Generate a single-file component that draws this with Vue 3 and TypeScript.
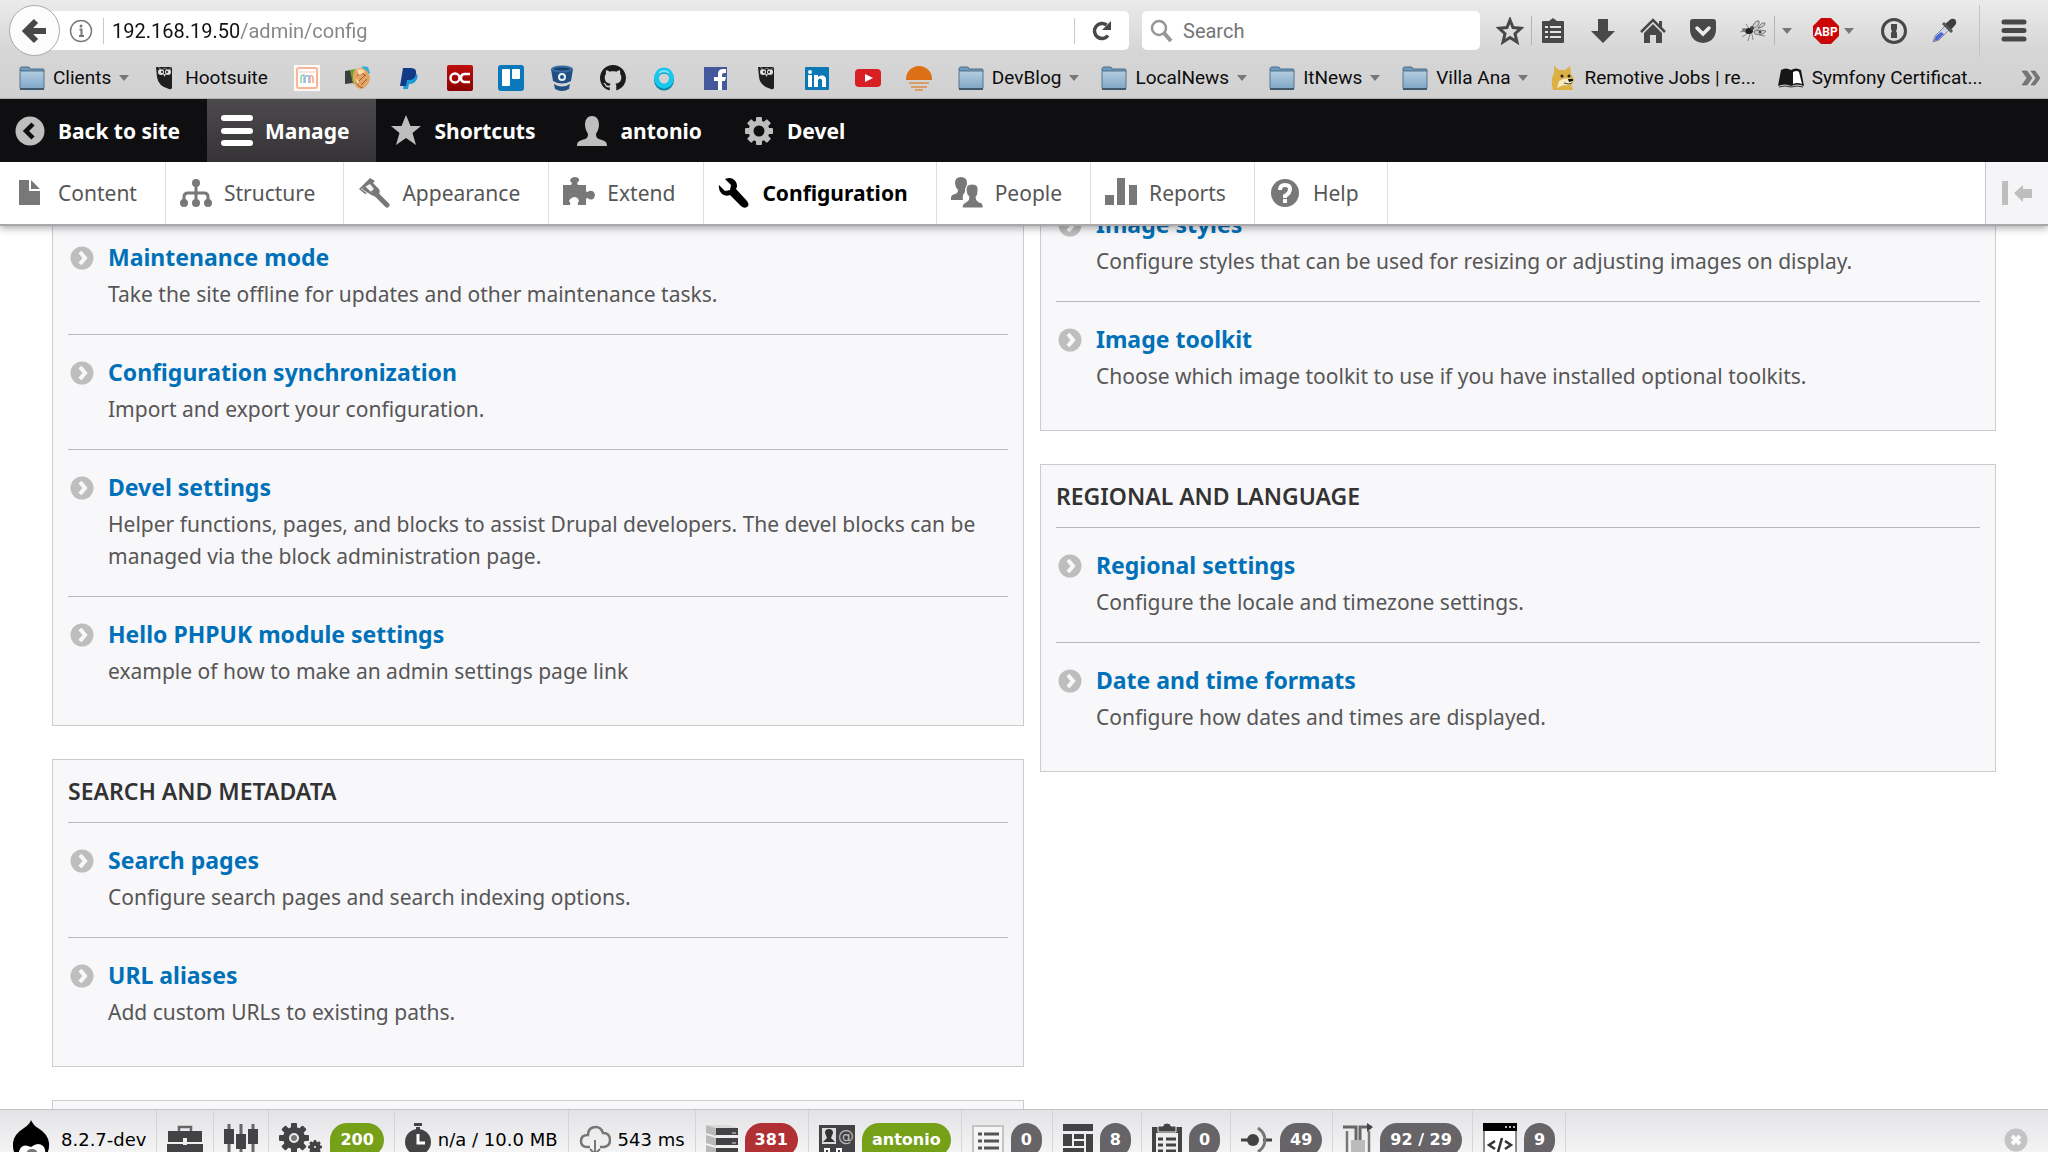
<script setup lang="ts">
interface Glyph { w: number; h: number; body: string }
interface Bookmark { icon: string; label?: string; menu?: boolean; title: string }
interface Entry { title: string; text: string }
interface Panel { heading?: string; entries: Entry[] }
interface DebugItem { icon: string; label?: string; badge?: string; tone?: string; title: string }

const folder = '<defs><linearGradient id="fg" x1="0" y1="0" x2="0" y2="1"><stop offset="0" stop-color="#b4cde0"/><stop offset="1" stop-color="#7fa6c6"/></linearGradient></defs><path d="M1 5V3q0-2 2-2h6q2 0 2 2h13q1 0 1 1v2z" fill="#6f9bbd" stroke="#4b6d89"/><rect x="1" y="5" width="24" height="18" rx="1" fill="url(#fg)" stroke="#55748d"/><path d="M1 23h24" stroke="#40586c" stroke-width="2"/>'
const owl = '<path d="M5 2h16v21q-1 2-3 1Q7 21 6 12z" fill="#1f1f1f"/><circle cx="10" cy="7" r="3" fill="#ddd"/><circle cx="17" cy="7" r="3" fill="#ddd"/><circle cx="11" cy="7" r="1" fill="#111"/><circle cx="16" cy="7" r="1" fill="#111"/><path d="M12 9l1.500 3L15 9z" fill="#ccc"/><path d="M7 2l4 3 3-2 3 2 4-3" stroke="#888" fill="none"/>'
const personPath = 'M16 1c5 0 7 4 7 9 0 4-2 7-3 9 0 4 2 5 6 6 3 1 5 2 5 6H1c0-4 2-5 5-6 4-1 6-2 6-6-1-2-3-5-3-9 0-5 2-9 7-9z'

const teeth = (cx: number, cy: number, r: number, n: number, w: number, len: number) =>
  Array.from({ length: n }, (_, i) => `<rect x="${cx - w / 2}" y="${cy - r - len}" width="${w}" height="${len + 3}" rx="1" transform="rotate(${(360 / n) * i} ${cx} ${cy})"/>`).join('')

const glyphs: Record<string, Glyph> = {
  folder: { w: 26, h: 24, body: folder },
  owl: { w: 26, h: 26, body: owl },
  mm: { w: 26, h: 26, body: '<rect width="26" height="26" fill="#fff8f3"/><rect x="3" y="3" width="20" height="20" rx="2" fill="#fff" stroke="#f9b597" stroke-width="2"/><path d="M5 7h16" stroke="#f9c9b2"/><path d="M7 18v-6q0-2 3-2v8" stroke="#8fd0ad" stroke-width="1.500" fill="none"/><path d="M11 18v-6q1-2 4-1v7" stroke="#8bb6e8" stroke-width="1.500" fill="none"/><path d="M16 18v-7q3-1 3 2v5" stroke="#f3a88c" stroke-width="1.500" fill="none"/>' },
  hands: { w: 26, h: 26, body: '<path d="M0 6l6-1 2 13-8 1z" fill="#3c3f3a"/><path d="M5 5l5-1 3 13-5 2z" fill="#6aa329"/><path d="M17 1l6 1 2 6-5 3z" fill="#2bb0d8"/><path d="M9 6q6-6 12-1 4 4 4 9-2 8-9 10-6-1-7-6-2-7 0-12z" fill="#e3a565"/><path d="M12 11q4-5 9 0M14 16l6-6M16 20l6-6M11 17q3 6 7 6" stroke="#9c5a2c" fill="none"/><path d="M12 5q5-3 8 2l-6 3zM11 13l3 4-2 2z" fill="#f8dcb0"/>' },
  paypal: { w: 26, h: 26, body: '<path d="M10 7h8q5 2 3 7-2 5-8 5l-1 5H7z" fill="#1a9bd8"/><path d="M7 3h8q6 0 5 6-1 6-7 6h-2l-1 6H4z" fill="#123a87"/>' },
  oc: { w: 26, h: 26, body: '<defs><linearGradient id="og" x1="0" y1="0" x2="0" y2="1"><stop offset="0" stop-color="#c00d0d"/><stop offset="1" stop-color="#8a0000"/></linearGradient></defs><rect width="26" height="26" rx="2" fill="url(#og)"/><circle cx="8" cy="13" r="4.500" fill="none" stroke="#fff" stroke-width="2.500"/><path d="M23 9h-5q-4 0-4 4t4 4h5" fill="none" stroke="#fff" stroke-width="2.500"/>' },
  trello: { w: 26, h: 26, body: '<rect width="26" height="26" rx="3" fill="#0a78bb"/><rect x="4" y="4" width="8" height="17" rx="1" fill="#fff"/><rect x="14" y="4" width="8" height="10" rx="1" fill="#fff"/>' },
  bitbucket: { w: 26, h: 26, body: '<path d="M2 4l2 12q9 5 18 0l2-12z" fill="#205081"/><ellipse cx="13" cy="4" rx="11" ry="3.500" fill="#3a6ca4"/><ellipse cx="13" cy="4" rx="8" ry="1.500" fill="#173f6b"/><path d="M5 19q8 5 16 0l-1 5q-7 4-14 0z" fill="#205081"/><circle cx="13" cy="12" r="3" fill="none" stroke="#e6eef6" stroke-width="2"/>' },
  github: { w: 26, h: 26, body: '<g transform="scale(1.625)"><path fill="#1b1a1c" d="M8 0C3.580 0 0 3.580 0 8c0 3.540 2.290 6.530 5.470 7.590.4.070.55-.17.55-.38 0-.19-.01-.82-.01-1.490-2.010.37-2.530-.49-2.690-.94-.09-.23-.48-.94-.82-1.130-.28-.15-.68-.52-.01-.53.63-.01 1.080.58 1.230.82.72 1.210 1.870.87 2.330.66.07-.52.28-.87.51-1.070-1.780-.2-3.640-.89-3.640-3.950 0-.87.31-1.590.82-2.150-.08-.2-.36-1.020.08-2.120 0 0 .67-.21 2.200.82.64-.18 1.320-.27 2-.27s1.360.09 2 .27c1.530-1.040 2.200-.82 2.200-.82.44 1.100.16 1.920.08 2.120.51.56.82 1.270.82 2.150 0 3.070-1.870 3.750-3.650 3.950.29.25.54.73.54 1.480 0 1.070-.01 1.930-.01 2.200 0 .21.15.46.55.38A8.010 8.010 0 0016 8c0-4.420-3.580-8-8-8z"/></g>' },
  ring: { w: 26, h: 26, body: '<ellipse cx="13" cy="15" rx="8" ry="8.500" fill="none" stroke="#0d87a0" stroke-width="4"/><ellipse cx="13" cy="13" rx="7.500" ry="8" fill="none" stroke="#16c8ee" stroke-width="5"/><path d="M8 8q5-4 10 0" stroke="#7be6fa" stroke-width="2" fill="none"/>' },
  facebook: { w: 26, h: 26, body: '<rect x="2" y="2" width="23" height="23" fill="#43599b"/><path d="M16 25v-9h-4v-4h4V9q0-5 5-5h3v4h-2q-2 0-2 2v2h4l-1 4h-3v9z" fill="#fff"/>' },
  linkedin: { w: 26, h: 26, body: '<rect x="1" y="2" width="24" height="23" rx="1" fill="#0b78b6"/><circle cx="6" cy="7" r="2" fill="#fff"/><path d="M4 10h4v12H4zM10 10h4v2q5-4 8 1v9h-4v-7q-2-3-4 0v7h-4z" fill="#fff"/>' },
  youtube: { w: 26, h: 26, body: '<rect y="4" width="26" height="18" rx="4" fill="#d81f24"/><path d="M10 9l8 4-8 4z" fill="#fff"/>' },
  sun: { w: 26, h: 26, body: '<path d="M0 14a13 13 0 1 1 26 0v1H0z" fill="#dc7015"/><path d="M3 18h20M5 22h16M9 25h8" stroke="#dc8a42" stroke-width="1.500"/>' },
  doge: { w: 26, h: 26, body: '<path d="M3 25Q0 14 4 8V1l5 4h6l5-4 1 8 3 5q0 4-3 5l2 6z" fill="#dcb042"/><path d="M9 16q5-4 12-2l2 2q-2 5-9 4l-7 3z" fill="#f4e9c4"/><circle cx="12" cy="11" r="1.500" fill="#222"/><circle cx="19" cy="11" r="1.500" fill="#222"/><path d="M18 14h5v2l-4 1z" fill="#111"/><path d="M14 18q5 2 8 0" stroke="#442" fill="none"/>' },
  leanpub: { w: 26, h: 26, body: '<path d="M0 21L3 5q5-3 10 0 5-3 10 0l3 16q-7-3-13 0-6-3-13 0z" fill="#161616"/><path d="M15 7q4-2 6 0l3 12q-5-2-9 0z" fill="#fff"/><path d="M1 22q6-2 12 0 6-2 12 0" stroke="#333" fill="none"/>' },
  chevrons: { w: 22, h: 16, body: '<path d="M2 1h5l5 7-5 7H2l5-7zM11 1h4l5 7-5 7h-4l5-7z" fill="#777" stroke="#555" stroke-width=".5"/>' },
  back: { w: 26, h: 28, body: '<path d="M14 4L4 14l10 10M5 14h19" fill="none" stroke="#484848" stroke-width="6"/>' },
  info: { w: 24, h: 24, body: '<circle cx="12" cy="12" r="10.500" fill="none" stroke="#7b7b7b" stroke-width="1.500"/><path d="M10.500 10.500h2V17M10 17h5" stroke="#777" stroke-width="2" fill="none"/><circle cx="12" cy="7" r="1.500" fill="#777"/>' },
  reload: { w: 22, h: 22, body: '<path d="M17 15.500A7.500 7.500 0 1 1 15.500 5" fill="none" stroke="#484848" stroke-width="3.500"/><path d="M20 1v9h-9z" fill="#484848"/>' },
  magnifier: { w: 24, h: 24, body: '<circle cx="9" cy="9" r="7" fill="none" stroke="#979797" stroke-width="2.500"/><path d="M14 14l7 8" stroke="#979797" stroke-width="4"/>' },
  star: { w: 28, h: 28, body: '<path d="M14 3l3 7.500 8 .8-6 5.400 2 8.300-7-4.500L7 25l2-8.300-6-5.400 8-.8z" fill="none" stroke="#484848" stroke-width="3"/>' },
  list: { w: 28, h: 28, body: '<path d="M10 4l4-3 4 3h6q1 0 1 1v20q0 1-1 1H4q-1 0-1-1V5q0-1 1-1z" fill="#484848"/><path d="M6 9h3v2H6zM11 9h11v2H11zM6 14h3v2H6zM11 14h11v2H11zM6 19h3v2H6zM11 19h11v2H11z" fill="#e4e4e4"/>' },
  down: { w: 28, h: 28, body: '<path d="M9 2h10v12h7L14 26 2 14h7z" fill="#484848"/>' },
  home: { w: 28, h: 28, body: '<path d="M2 15L14 3l12 12" fill="none" stroke="#484848" stroke-width="2.500"/><path d="M20 4h3v6h-3zM5 16l9-9 9 9v10h-6v-8h-6v8H5z" fill="#484848"/>' },
  pocket: { w: 28, h: 28, body: '<path d="M4 2h20q3 0 3 3v8Q26 25 14 26 2 25 1 13V5q0-3 3-3z" fill="#484848"/><path d="M8 11l6 6 6-6" stroke="#eee" stroke-width="3.500" fill="none" stroke-linecap="round"/>' },
  bug: { w: 28, h: 28, body: '<path d="M1 15l7-2M3 20l6-4M9 24l2-7M14 23l-1-6M19 6l-6 7M25 8l-8 5M20 18l6 1M7 7l4 6" stroke="#888"/><ellipse cx="10" cy="14" rx="4" ry="3" fill="#222"/><circle cx="5" cy="13" r="2" fill="#777"/><path d="M13 12q2-9 7-8 1 5-6 8zM19 11q3-6 7-5 0 4-7 5zM15 14q7-2 12 0-3 5-11 3z" fill="#ccc" stroke="#777"/><circle cx="13" cy="11" r="2" fill="#444"/><circle cx="21" cy="15" r="1.500" fill="#444"/>' },
  abp: { w: 28, h: 28, body: '<path d="M9 1h10l8 8v10l-8 8H9l-8-8V9z" fill="#cb0606"/><text x="14" y="19" text-anchor="middle" font-family="Roboto, sans-serif" font-size="12" font-weight="700" fill="#fff">ABP</text>' },
  onepass: { w: 28, h: 28, body: '<circle cx="14" cy="14" r="11.500" fill="none" stroke="#484848" stroke-width="3"/><path d="M11 7h6v5l-1 2 1 2v5h-6v-5l1-2-1-2z" fill="#484848"/>' },
  dropper: { w: 28, h: 28, body: '<path d="M3 25l2-6L16 8l4 4L9 23z" fill="#cfd6e6" stroke="#888"/><path d="M4 24l2-5 5-4 3 2-6 6z" fill="#4a66d8"/><path d="M14 8l7-6q6-1 5 5l-6 7z" fill="#3d3d3d"/><path d="M13 6l9 9" stroke="#555" stroke-width="3"/>' },
  burger: { w: 28, h: 28, body: '<path d="M4 5h20M4 13.500h20M4 22h20" stroke="#484848" stroke-width="5" stroke-linecap="round"/>' },
  backsite: { w: 32, h: 32, body: '<circle cx="16" cy="16" r="14.500" fill="#bebebe"/><path d="M19 9l-7 7 7 7" fill="none" stroke="#0f0f11" stroke-width="4.500"/>' },
  manage: { w: 32, h: 32, body: '<path d="M3 3h26M3 16h26M3 28h26" stroke="#fff" stroke-width="6" stroke-linecap="round"/>' },
  starfull: { w: 32, h: 32, body: '<path d="M16 0l4.500 11H31l-8.500 7L26 30l-10-7-10 7 3.500-12L1 11h10.500z" fill="#bebebe"/>' },
  person: { w: 32, h: 32, body: `<path d="${personPath}" fill="#bebebe"/>` },
  gear: { w: 32, h: 32, body: `<g fill="#bebebe">${teeth(16, 16, 10, 8, 6, 4)}</g><circle cx="16" cy="16" r="8" fill="none" stroke="#bebebe" stroke-width="5"/>` },
  content: { w: 32, h: 32, body: '<path d="M5 3h10v11h11v14H5z" fill="#787878"/><path d="M17 3l9 9h-9z" fill="#787878"/>' },
  structure: { w: 32, h: 32, body: '<g fill="#787878"><circle cx="16" cy="6" r="4"/><circle cx="4" cy="26" r="4"/><circle cx="16" cy="26" r="4"/><circle cx="28" cy="26" r="4"/></g><path d="M16 6v20M4 26v-6q0-4 4-4h16q4 0 4 4v6" fill="none" stroke="#787878" stroke-width="3"/>' },
  appearance: { w: 32, h: 32, body: '<path d="M1 12L12 1l5 3-2 2 5 5q3 3 1 6l-4 3-4-5-6 2z" fill="#787878"/><path d="M3 12l9-5 4 5-6 5z" fill="#fff" opacity=".9"/><path d="M4 12l3-3 7 7 7-3-6 6z" fill="#787878"/><path d="M19 18l10 10" stroke="#787878" stroke-width="5" stroke-linecap="round"/>' },
  extend: { w: 32, h: 32, body: '<path d="M0 8h8q2-2-1-4 0-3 4-4 6 0 5 4-3 2-1 4h8v6q1 2 3 0 5-1 6 4-1 6-6 4-2-2-3 0v6h-8q-1-2 1-4-1-4-5-4-4 1-5 4 2 2 1 4H0z" fill="#787878"/>' },
  config: { w: 32, h: 32, body: '<path d="M7 2q7-3 11 3 2 4 0 7l11 12q3 4 0 6-3 2-6-1L12 18q-4 2-8-1-4-4-3-9l6 6 5-1 1-5z" fill="#000"/>' },
  people: { w: 32, h: 32, body: '<path d="M10 0q6 0 6 6 0 3-2 6v3q-3 3-2 8H0q-1-5 4-6 3-1 3-4-3-3-3-7 0-6 6-6z" fill="#787878"/><path d="M21 7q7 0 6 7 0 4-2 6 0 4 3 5 5 1 4 6H11q0-5 4-6 3-1 3-5-3-3-3-7 0-6 6-6z" fill="#787878" stroke="#fff"/>' },
  reports: { w: 32, h: 32, body: '<path d="M0 18h9v10H0zM12 1h8v27h-8zM24 8h8v20h-8z" fill="#787878"/>' },
  help: { w: 32, h: 32, body: '<circle cx="16" cy="16" r="14" fill="#787878"/><path d="M11 13q0-5 5-5t5 4-5 7v2" fill="none" stroke="#fff" stroke-width="4"/><rect x="14" y="22" width="4" height="4" fill="#fff"/>' },
  orient: { w: 32, h: 26, body: '<path d="M1 1h6v24H1zM13 13l9-8v4h9v9h-9v4z" fill="#bebebe"/>' },
  arrow: { w: 24, h: 24, body: '<circle cx="12" cy="12" r="11.500" fill="#bebebe"/><path d="M10 6l5 6-5 6" fill="none" stroke="#f8f8fa" stroke-width="4"/>' },
  drupal: { w: 41, h: 40, body: '<path d="M18 0q2 5 7 8 10 6 11 15 1 13-10 17H10Q-1 36 0 23 1 14 11 8q6-4 7-8z" fill="#000"/><path d="M7 29q3-6 11-2 8-6 13 0 3 7-1 10-3 1-10-4-6 6-10 4-6-3-3-8z" fill="#fff"/><path d="M15 30q4-2 8 0l3 5h-14z" fill="#777"/>' },
  briefcase: { w: 36, h: 32, body: '<path d="M12 8V3h12v5" fill="none" stroke="#666" stroke-width="2.500"/><path d="M1 7h34v11H1zM0 20h36v12H0z" fill="#434244"/><rect x="16" y="14" width="4" height="7" fill="#eee"/>' },
  sliders: { w: 34, h: 32, body: '<path d="M5 0v32M17 0v32M29 0v32" stroke="#666" stroke-width="3"/><path d="M0 5h10v15H0zM12 10h10v15H12zM24 5h10v15H24z" fill="#434244"/>' },
  gears: { w: 44, h: 36, body: `<g fill="#434244">${teeth(15, 16, 10, 8, 6, 5)}${teeth(36, 25, 4, 8, 3, 3)}</g><circle cx="15" cy="16" r="8" fill="none" stroke="#434244" stroke-width="6"/><circle cx="15" cy="16" r="3" fill="#777"/><circle cx="36" cy="25" r="4" fill="none" stroke="#434244" stroke-width="3"/>` },
  stopwatch: { w: 26, h: 34, body: '<path d="M9 0h8v3H9zM11 4h4v4h-4z" fill="#434244"/><circle cx="13" cy="19" r="13" fill="#434244"/><path d="M13 11v9h7" fill="none" stroke="#fff" stroke-width="3"/>' },
  cloud: { w: 32, h: 30, body: '<path d="M11 22H8q-6 0-6-6t7-6q0-8 8-8 5 0 7 6 7 0 7 7 0 6-6 7h-4" fill="none" stroke="#777" stroke-width="2.500"/><path d="M16 15v14M11 24l5 5 5-5" fill="none" stroke="#777" stroke-width="2"/>' },
  server: { w: 32, h: 30, body: '<path d="M0 0l10 3v8L0 8zM0 10l10 3v8L0 18zM0 20l10 3v8L0 28z" fill="#b9b9b9"/><path d="M10 3h22v7H10zM10 13h22v7H10zM10 23h22v7H10z" fill="#434244"/><path d="M0 0h22l10 3H10z" fill="#d9d9d9"/><path d="M26 8h4M26 18h4M26 28h4" stroke="#ddd"/>' },
  idcard: { w: 36, h: 30, body: '<rect width="36" height="30" fill="#434244"/><rect x="3" y="3" width="14" height="16" fill="#ddd"/><path d="M10 4q4 0 4 4l-2 5 4 4H4l4-4-2-5q0-4 4-4z" fill="#333"/><text x="27" y="16" text-anchor="middle" font-family="DejaVu Sans, sans-serif" font-size="16" fill="#bbb">@</text><path d="M6 30v-6h4v6M18 30v-6h4v6" stroke="#fff" stroke-width="2" fill="none"/>' },
  bullets: { w: 32, h: 30, body: '<rect x="1" y="1" width="30" height="36" fill="#f5f5f5" stroke="#c4c4c4" stroke-width="2"/><path d="M6 9h4M6 16h4M6 23h4M12 9h15M12 16h15M12 23h15" stroke="#555" stroke-width="3"/>' },
  layout: { w: 30, h: 32, body: '<path d="M0 0h30v7H0zM0 10h9v12H0zM11 10h10v5H11zM11 17h10v5H11zM0 24h21v8H0zM23 10h7v22h-7z" fill="#434244"/>' },
  clipboard: { w: 30, h: 34, body: '<path d="M0 4h30v30H0z" fill="#434244"/><path d="M4 10h22v24H4z" fill="#eee"/><path d="M6 9V3h5q0-3 4-3t4 3h5v6z" fill="#434244" stroke="#eee"/><path d="M6 16h5M14 16h10M6 22h5M14 22h10M6 28h5M14 28h10" stroke="#434244" stroke-width="3"/>' },
  plug: { w: 32, h: 32, body: '<path d="M0 16h10M22 16h9" stroke="#434244" stroke-width="3"/><circle cx="12" cy="16" r="6" fill="#434244"/><path d="M17 4q7 5 7 12t-7 12" fill="none" stroke="#777" stroke-width="3"/>' },
  flow: { w: 30, h: 34, body: '<path d="M0 4h13v13M17 17V4h8" fill="none" stroke="#666" stroke-width="3"/><path d="M24 0l6 4-6 5z" fill="#434244"/><path d="M4 8v28h22V8" fill="none" stroke="#777" stroke-width="2.500"/><rect x="8" y="17" width="14" height="18" fill="#bbb"/>' },
  code: { w: 34, h: 34, body: '<rect x="1" y="1" width="32" height="40" fill="#fff" stroke="#222"/><path d="M0 0h34v8H0z" fill="#000"/><path d="M22 4h2M26 4h2M30 4h2" stroke="#bbb" stroke-width="2"/><path d="M12 18l-6 4 6 4M22 18l6 4-6 4M19 15l-4 14" fill="none" stroke="#333" stroke-width="2.500"/>' },
  close: { w: 24, h: 24, body: '<circle cx="12" cy="12" r="11.500" fill="#c4c3c5"/><path d="M8 8l8 8M16 8l-8 8" stroke="#fafafa" stroke-width="4"/>' },
}

const bookmarks: Bookmark[] = [
  { icon: 'folder', label: 'Clients', menu: true, title: 'Clients' },
  { icon: 'owl', label: 'Hootsuite', title: 'Hootsuite' },
]
const shortcuts: string[] = ['mm', 'hands', 'paypal', 'oc', 'trello', 'bitbucket', 'github', 'ring', 'facebook', 'owl', 'linkedin', 'youtube', 'sun']
const moreBookmarks: Bookmark[] = [
  { icon: 'folder', label: 'DevBlog', menu: true, title: 'DevBlog' },
  { icon: 'folder', label: 'LocalNews', menu: true, title: 'LocalNews' },
  { icon: 'folder', label: 'ItNews', menu: true, title: 'ItNews' },
  { icon: 'folder', label: 'Villa Ana', menu: true, title: 'Villa Ana' },
  { icon: 'doge', label: 'Remotive Jobs | re...', title: 'Remotive Jobs' },
  { icon: 'leanpub', label: 'Symfony Certificat...', title: 'Symfony' },
]
const adminTabs = [
  { icon: 'backsite', label: 'Back to site' },
  { icon: 'manage', label: 'Manage' },
  { icon: 'starfull', label: 'Shortcuts' },
  { icon: 'person', label: 'antonio' },
  { icon: 'gear', label: 'Devel' },
]
const trayTabs = [
  { icon: 'content', label: 'Content' },
  { icon: 'structure', label: 'Structure' },
  { icon: 'appearance', label: 'Appearance' },
  { icon: 'extend', label: 'Extend' },
  { icon: 'config', label: 'Configuration' },
  { icon: 'people', label: 'People' },
  { icon: 'reports', label: 'Reports' },
  { icon: 'help', label: 'Help' },
]
const leftPanels: Panel[] = [
  { entries: [
    { title: 'Maintenance mode', text: 'Take the site offline for updates and other maintenance tasks.' },
    { title: 'Configuration synchronization', text: 'Import and export your configuration.' },
    { title: 'Devel settings', text: 'Helper functions, pages, and blocks to assist Drupal developers. The devel blocks can be managed via the block administration page.' },
    { title: 'Hello PHPUK module settings', text: 'example of how to make an admin settings page link' },
  ] },
  { heading: 'SEARCH AND METADATA', entries: [
    { title: 'Search pages', text: 'Configure search pages and search indexing options.' },
    { title: 'URL aliases', text: 'Add custom URLs to existing paths.' },
  ] },
  { entries: [] },
]
const rightPanels: Panel[] = [
  { entries: [
    { title: 'Image styles', text: 'Configure styles that can be used for resizing or adjusting images on display.' },
    { title: 'Image toolkit', text: 'Choose which image toolkit to use if you have installed optional toolkits.' },
  ] },
  { heading: 'REGIONAL AND LANGUAGE', entries: [
    { title: 'Regional settings', text: 'Configure the locale and timezone settings.' },
    { title: 'Date and time formats', text: 'Configure how dates and times are displayed.' },
  ] },
]
const columns = [{ side: 'left', panels: leftPanels }, { side: 'right', panels: rightPanels }]
const debugItems: DebugItem[] = [
  { icon: 'drupal', label: '8.2.7-dev', title: 'Drupal' },
  { icon: 'briefcase', title: 'Config' },
  { icon: 'sliders', title: 'Settings' },
  { icon: 'gears', badge: '200', tone: 'green', title: 'Request' },
  { icon: 'stopwatch', label: 'n/a / 10.0 MB', title: 'Time' },
  { icon: 'cloud', label: '543 ms', title: 'Load' },
  { icon: 'server', badge: '381', tone: 'red', title: 'Database' },
  { icon: 'idcard', badge: 'antonio', tone: 'green', title: 'User' },
  { icon: 'bullets', badge: '0', title: 'Views' },
  { icon: 'layout', badge: '8', title: 'Blocks' },
  { icon: 'clipboard', badge: '0', title: 'Forms' },
  { icon: 'plug', badge: '49', title: 'Events' },
  { icon: 'flow', badge: '92 / 29', title: 'Cache' },
  { icon: 'code', badge: '9', title: 'Assets' },
]
const box = (name: string) => ({ width: glyphs[name].w, height: glyphs[name].h, viewBox: `0 0 ${glyphs[name].w} ${glyphs[name].h}` })
</script>

<template>
  <div class="window">
    <header class="top">
      <div class="chrome">
        <div class="navbar">
          <div class="address">
            <button class="back" aria-label="Back"><svg v-bind="box('back')" v-html="glyphs.back.body" /></button>
            <button class="plain" aria-label="Site information"><svg v-bind="box('info')" v-html="glyphs.info.body" /></button>
            <span class="rule" />
            <input class="url" aria-label="Address" type="text" value="192.168.19.50/admin/config">
            <span class="rule" />
            <button class="plain reload" aria-label="Reload"><svg v-bind="box('reload')" v-html="glyphs.reload.body" /></button>
          </div>
          <label class="search">
            <svg v-bind="box('magnifier')" v-html="glyphs.magnifier.body" />
            <input type="text" placeholder="Search" aria-label="Search">
          </label>
          <div class="tools">
            <button class="plain" aria-label="Bookmark"><svg v-bind="box('star')" v-html="glyphs.star.body" /></button>
            <span class="rule tall" />
            <button class="plain" aria-label="Bookmark list"><svg v-bind="box('list')" v-html="glyphs.list.body" /></button>
            <button v-for="n in ['down', 'home', 'pocket', 'bug']" :key="n" class="plain spaced" :aria-label="n"><svg v-bind="box(n)" v-html="glyphs[n].body" /></button>
            <span class="rule tall" />
            <button class="plain" aria-label="Extension menu"><span class="caret" /></button>
            <button class="plain abp" aria-label="Ad block"><svg v-bind="box('abp')" v-html="glyphs.abp.body" /><span class="caret" /></button>
            <button v-for="n in ['onepass', 'dropper']" :key="n" class="plain spaced" :aria-label="n"><svg v-bind="box(n)" v-html="glyphs[n].body" /></button>
            <span class="rule full" />
            <button class="plain" aria-label="Menu"><svg v-bind="box('burger')" v-html="glyphs.burger.body" /></button>
          </div>
        </div>
        <nav class="bookmarks" aria-label="Bookmarks">
          <div class="marks lead">
            <a v-for="b in bookmarks" :key="b.title" href="#" class="mark"><svg v-bind="box(b.icon)" v-html="glyphs[b.icon].body" />{{ b.label }}<span v-if="b.menu" class="caret" /></a>
          </div>
          <div class="marks tiny">
            <a v-for="(s, i) in shortcuts" :key="i" href="#" class="mark" :aria-label="s"><svg v-bind="box(s)" v-html="glyphs[s].body" /></a>
          </div>
          <div class="marks">
            <a v-for="b in moreBookmarks" :key="b.title" href="#" class="mark"><svg v-bind="box(b.icon)" v-html="glyphs[b.icon].body" />{{ b.label }}<span v-if="b.menu" class="caret" /></a>
          </div>
          <button class="plain overflow" aria-label="More bookmarks"><svg v-bind="box('chevrons')" v-html="glyphs.chevrons.body" /></button>
        </nav>
      </div>
      <nav class="admin" aria-label="Administration toolbar">
        <a v-for="t in adminTabs" :key="t.label" href="#" :class="{ active: t.label === 'Manage' }"><svg v-bind="box(t.icon)" v-html="glyphs[t.icon].body" />{{ t.label }}</a>
      </nav>
      <nav class="tray" aria-label="Administration menu">
        <a v-for="t in trayTabs" :key="t.label" href="#" :class="{ active: t.label === 'Configuration' }"><svg v-bind="box(t.icon)" v-html="glyphs[t.icon].body" />{{ t.label }}</a>
        <button class="orient" aria-label="Vertical orientation"><svg v-bind="box('orient')" v-html="glyphs.orient.body" /></button>
      </nav>
    </header>

    <main class="page">
      <div v-for="c in columns" :key="c.side" class="column" :class="c.side">
        <section v-for="(p, i) in c.panels" :key="i" class="panel">
          <h3 v-if="p.heading">{{ p.heading }}</h3>
          <dl>
            <div v-for="e in p.entries" :key="e.title" class="entry">
              <svg v-bind="box('arrow')" v-html="glyphs.arrow.body" />
              <dt><a href="#">{{ e.title }}</a></dt>
              <dd>{{ e.text }}</dd>
            </div>
          </dl>
        </section>
      </div>
    </main>

    <footer class="debug">
      <a v-for="d in debugItems" :key="d.title" href="#" :title="d.title">
        <svg v-bind="box(d.icon)" v-html="glyphs[d.icon].body" />
        <span v-if="d.label">{{ d.label }}</span>
        <span v-if="d.badge" class="badge" :class="d.tone">{{ d.badge }}</span>
      </a>
      <button class="plain close" aria-label="Close"><svg v-bind="box('close')" v-html="glyphs.close.body" /></button>
    </footer>
  </div>
</template>

<style>
body { background: #fff; overflow: hidden; }
</style>

<style scoped>
* { box-sizing: border-box; }
svg { display: block; flex: none; }
a { text-decoration: none; color: inherit; }
button { font: inherit; cursor: pointer; }
.window { height: 100vh; display: flex; flex-direction: column; overflow: hidden; font-family: "Noto Sans", "Open Sans", sans-serif; }
.top { position: relative; z-index: 2; flex: none; border-bottom: 2px solid #a9a7aa; box-shadow: 0 2px 8px rgba(0, 0, 0, .35); }
.chrome { height: 99px; background: linear-gradient(#ebebeb, #d6d6d6 50px, #d2d1d2); font-family: Roboto, "Noto Sans", sans-serif; border-bottom: 1px solid #b0b0b0; }
.navbar { height: 59px; display: flex; align-items: center; padding: 2px 20px 0 10px; }
.plain { display: flex; align-items: center; justify-content: center; padding: 0; border: 0; background: none; }
.address { flex: 1; height: 39px; margin-left: 25px; display: flex; align-items: center; background: #fff; border-radius: 0 5px 5px 0; }
.back { flex: none; width: 51px; height: 51px; margin: 0 9px 0 -26px; border: 1px solid #aaa; border-radius: 50%; background: #fcfcfc; display: flex; align-items: center; justify-content: center; padding: 0; }
.rule { flex: none; width: 1px; height: 26px; background: #c8c8c8; margin-left: 10px; }
.url { flex: 1; min-width: 0; height: 30px; padding: 0; margin-left: 8px; border: 0; outline: 0; font: 20px/30px Roboto, sans-serif; color: transparent; background: linear-gradient(90deg, #111 127px, #858585 127px); -webkit-background-clip: text; background-clip: text; }
.reload { width: 54px; }
.search { width: 338px; height: 39px; margin-left: 13px; padding: 0 8px; display: flex; align-items: center; gap: 9px; background: #fff; border-radius: 5px; }
.search input { flex: 1; min-width: 0; border: 0; padding: 0; outline: 0; background: none; font: 20px/30px Roboto, sans-serif; color: #222; }
.search input::placeholder { color: #757575; opacity: 1; }
.tools { display: flex; align-items: center; margin-left: 16px; }
.tools .rule { margin: 0 8px; }
.tools .tall { height: 29px; margin: 0 7px; background: #b4b4b4; }
.tools .full { height: 52px; margin: 0 20px 0 21px; background: #c4c4c4; }
.tools .spaced { margin-left: 22px; }
.abp { margin-left: 20px; gap: 4px; }
.tools .abp + .spaced { margin-left: 26px; }
.caret { width: 0; height: 0; border: 5px solid transparent; border-top: 6px solid #777; border-bottom: 0; }
.bookmarks { height: 37px; display: flex; align-items: center; padding: 0 6px 0 19px; font-size: 19px; line-height: 24px; color: #0c0c0c; }
.marks { display: flex; gap: 22px; margin-right: 26px; }
.tiny { gap: 25px; }
.mark { display: flex; align-items: center; gap: 8px; white-space: nowrap; }
.overflow { margin-left: auto; }
.admin { height: 63px; display: flex; background: #0f0f11; color: #fff; font-size: 21px; font-weight: 700; }
.admin a, .tray a { display: flex; align-items: center; gap: 12px; padding: 0 28px 0 14px; white-space: nowrap; }
.admin a { padding-right: 27px; }
.admin .active { background: linear-gradient(#4c4a4d, #353336); }
.tray { height: 62px; display: flex; background: #fff; color: #565656; font-size: 21px; }
.tray a { border-right: 1px solid #ddd; }
.tray .active { color: #000; font-weight: 700; }
.orient { margin-left: auto; width: 63px; border: 0; border-left: 1px solid #c8c8c8; background: #f5f4f6; padding: 0 0 0 15px; }
.page { flex: 1; min-height: 0; display: flex; gap: 16px; margin-top: -41px; padding: 0 52px; }
.column { flex: 956; min-width: 0; display: flex; flex-direction: column; gap: 33px; }
.left { flex-grow: 972; padding-top: 33px; }
.panel { flex: none; background: #f8f7fa; border: 1px solid #cccbce; padding: 0 15px 14px; }
.panel h3 { margin: 0; padding: 15px 0; font-size: 23px; line-height: 32px; font-weight: 600; color: #333; }
dl { margin: 0; }
.entry { display: grid; grid-template-columns: 24px 1fr; column-gap: 16px; row-gap: 5px; padding: 21px 0 24px; border-top: 1px solid #b8b8ba; }
.entry svg { margin: 5px 2px; height: 24px; }
dt, dd { margin: 0; grid-column: 2; font-size: 21px; line-height: 32px; }
dt { height: 32px; font-weight: 700; font-size: 23px; color: #0071b8; }
dd { color: #565656; }
.entry svg { margin-bottom: 0; }
.debug { position: relative; z-index: 2; flex: none; height: 43px; overflow: hidden; display: flex; align-items: flex-start; padding-left: 3px; border-top: 1px solid #c4c3c6; background: linear-gradient(#e3e2e5, #f4f4f5); font: 18px/24px "DejaVu Sans", sans-serif; color: #000; }
.debug a { height: 60px; display: flex; align-items: center; gap: 7px; padding: 0 10px; border-right: 1px solid #d5d5d7; white-space: nowrap; }
.badge { height: 34px; padding: 0 10px; border-radius: 17px 17px 17px 4px; background: #666467; color: #fff; font-size: 16px; line-height: 34px; font-weight: 700; }
.green { background: #76a018; }
.red { background: #b03034; }
.close { height: 60px; margin: 0 20px 0 auto; }
</style>
